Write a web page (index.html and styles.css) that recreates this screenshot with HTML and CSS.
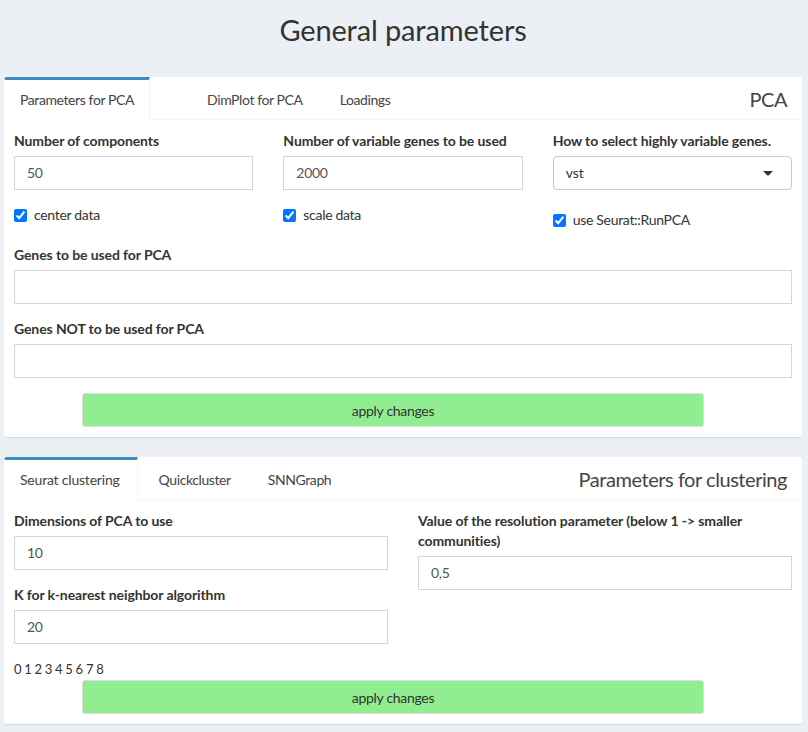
FILE: index.html
```html
<!DOCTYPE html>
<html>
<head>
<meta charset="utf-8">
<link rel="stylesheet" href="styles.css">
</head>
<body>
<div class="page">
  <h2 class="page-title">General parameters</h2>

  <div class="tabbox">
    <div class="tab-header">
      <ul class="tabs">
        <li class="tab active">Parameters for PCA</li>
        <li class="tab empty"></li>
        <li class="tab">DimPlot for PCA</li>
        <li class="tab">Loadings</li>
      </ul>
      <div class="header-title">PCA</div>
    </div>
    <div class="tab-content">
      <div class="grid3">
        <div class="form-group">
          <label class="lbl">Number of components</label>
          <div class="input">50</div>
        </div>
        <div class="form-group">
          <label class="lbl">Number of variable genes to be used</label>
          <div class="input">2000</div>
        </div>
        <div class="form-group">
          <label class="lbl">How to select highly variable genes.</label>
          <div class="select"><span>vst</span><span class="caret"></span></div>
        </div>
        <label class="check"><input type="checkbox" checked><span>center data</span></label>
        <label class="check"><input type="checkbox" checked><span>scale data</span></label>
        <label class="check lower"><input type="checkbox" checked><span>use Seurat::RunPCA</span></label>
      </div>
      <div class="form-group">
        <label class="lbl">Genes to be used for PCA</label>
        <div class="input"></div>
      </div>
      <div class="form-group">
        <label class="lbl">Genes NOT to be used for PCA</label>
        <div class="input"></div>
      </div>
      <button class="btn-apply">apply changes</button>
    </div>
  </div>

  <div class="tabbox">
    <div class="tab-header">
      <ul class="tabs">
        <li class="tab active wide">Seurat clustering</li>
        <li class="tab">Quickcluster</li>
        <li class="tab">SNNGraph</li>
      </ul>
      <div class="header-title">Parameters for clustering</div>
    </div>
    <div class="tab-content">
      <div class="grid2">
        <div class="col">
          <div class="form-group">
            <label class="lbl">Dimensions of PCA to use</label>
            <div class="input">10</div>
          </div>
          <div class="form-group">
            <label class="lbl">K for k-nearest neighbor algorithm</label>
            <div class="input">20</div>
          </div>
        </div>
        <div class="col">
          <div class="form-group">
            <label class="lbl">Value of the resolution parameter (below 1 -&gt; smaller communities)</label>
            <div class="input">0,5</div>
          </div>
        </div>
      </div>
      <div class="clusters">0 1 2 3 4 5 6 7 8</div>
      <button class="btn-apply">apply changes</button>
    </div>
  </div>
</div>
</body>
</html>
```

FILE: styles.css
```css
html, body {
  margin: 0;
  padding: 0;
  background: #ecf0f5;
  font-family: "Source Sans Pro", Lato, "Helvetica Neue", sans-serif;
  font-size: 14px;
  line-height: 20px;
  color: #333;
}

.page {
  padding: 0 6px 10px 4px;
}

.page-title {
  margin: 0;
  height: 77px;
  display: flex;
  align-items: center;
  justify-content: center;
  padding-bottom: 18px;
  box-sizing: border-box;
  font-size: 29px;
  letter-spacing: -0.15px;
  font-weight: 400;
  color: #333;
}

.tabbox {
  background: #fff;
  border-radius: 3px;
  box-shadow: 0 1px 1px rgba(0, 0, 0, 0.1);
  margin-bottom: 20px;
}

.tab-header {
  display: flex;
  justify-content: space-between;
  border-bottom: 1px solid #f4f4f4;
  height: 43px;
  box-sizing: border-box;
}

.tabs {
  list-style: none;
  margin: 0;
  padding: 0;
  display: flex;
}

.tab {
  border-top: 3px solid transparent;
  margin-right: 5px;
  padding: 10px 15px;
  line-height: 20px;
  letter-spacing: -0.4px;
  color: #444;
  border-left: 1px solid transparent;
  border-right: 1px solid transparent;
  box-sizing: content-box;
  height: 20px;
}

.tab.active {
  border-top-color: #3c8dbc;
  border-right-color: #f4f4f4;
  border-top-left-radius: 3px;
  background: #fff;
  height: 21px;
}

.tab.wide {
  letter-spacing: -0.2px;
  padding-right: 17px;
}

.tab.empty {
  width: 0;
  padding-left: 14px;
}

.header-title {
  font-size: 20px;
  line-height: 44px;
  letter-spacing: -0.45px;
  padding-right: 15px;
  color: #444;
}

.tab-content {
  padding: 11px 10px 10px;
}

.grid3 {
  display: grid;
  grid-template-columns: 1fr 1fr 1fr;
  column-gap: 30px;
}

.grid2 {
  display: grid;
  grid-template-columns: 1fr 1fr;
  column-gap: 30px;
}

.form-group {
  margin-bottom: 15px;
}

.lbl {
  display: block;
  font-weight: 700;
  margin: 0 0 5px;
  letter-spacing: -0.1px;
  color: #333;
}

.input {
  height: 34px;
  box-sizing: border-box;
  border: 1px solid #d2d6de;
  padding: 6px 12px;
  color: #555;
  line-height: 20px;
  letter-spacing: -0.3px;
}

.select {
  height: 34px;
  box-sizing: border-box;
  border: 1px solid #c8c8c8;
  border-radius: 4px;
  padding: 6px 12px;
  color: #333;
  display: flex;
  justify-content: space-between;
  align-items: center;
}

.caret {
  width: 0;
  height: 0;
  border-left: 5px solid transparent;
  border-right: 5px solid transparent;
  border-top: 5px solid #333;
  margin-right: 6px;
}

.check {
  display: flex;
  align-items: center;
  height: 20px;
  margin: 0 0 20px;
  color: #333;
  letter-spacing: -0.3px;
}

.check.lower {
  margin-top: 5px;
  margin-bottom: 15px;
}

.check input {
  margin: 0 7px 0 0;
  width: 13px;
  height: 13px;
}

.btn-apply {
  display: block;
  margin-left: 68px;
  width: 622px;
  height: 34px;
  background: #90ee90;
  border: 1px solid #ddd;
  border-radius: 3px;
  font-family: inherit;
  font-size: 14px;
  letter-spacing: -0.3px;
  color: #333;
}

.clusters {
  line-height: 20px;
  height: 21px;
  font-size: 13px;
  letter-spacing: -0.3px;
  color: #333;
}
```
